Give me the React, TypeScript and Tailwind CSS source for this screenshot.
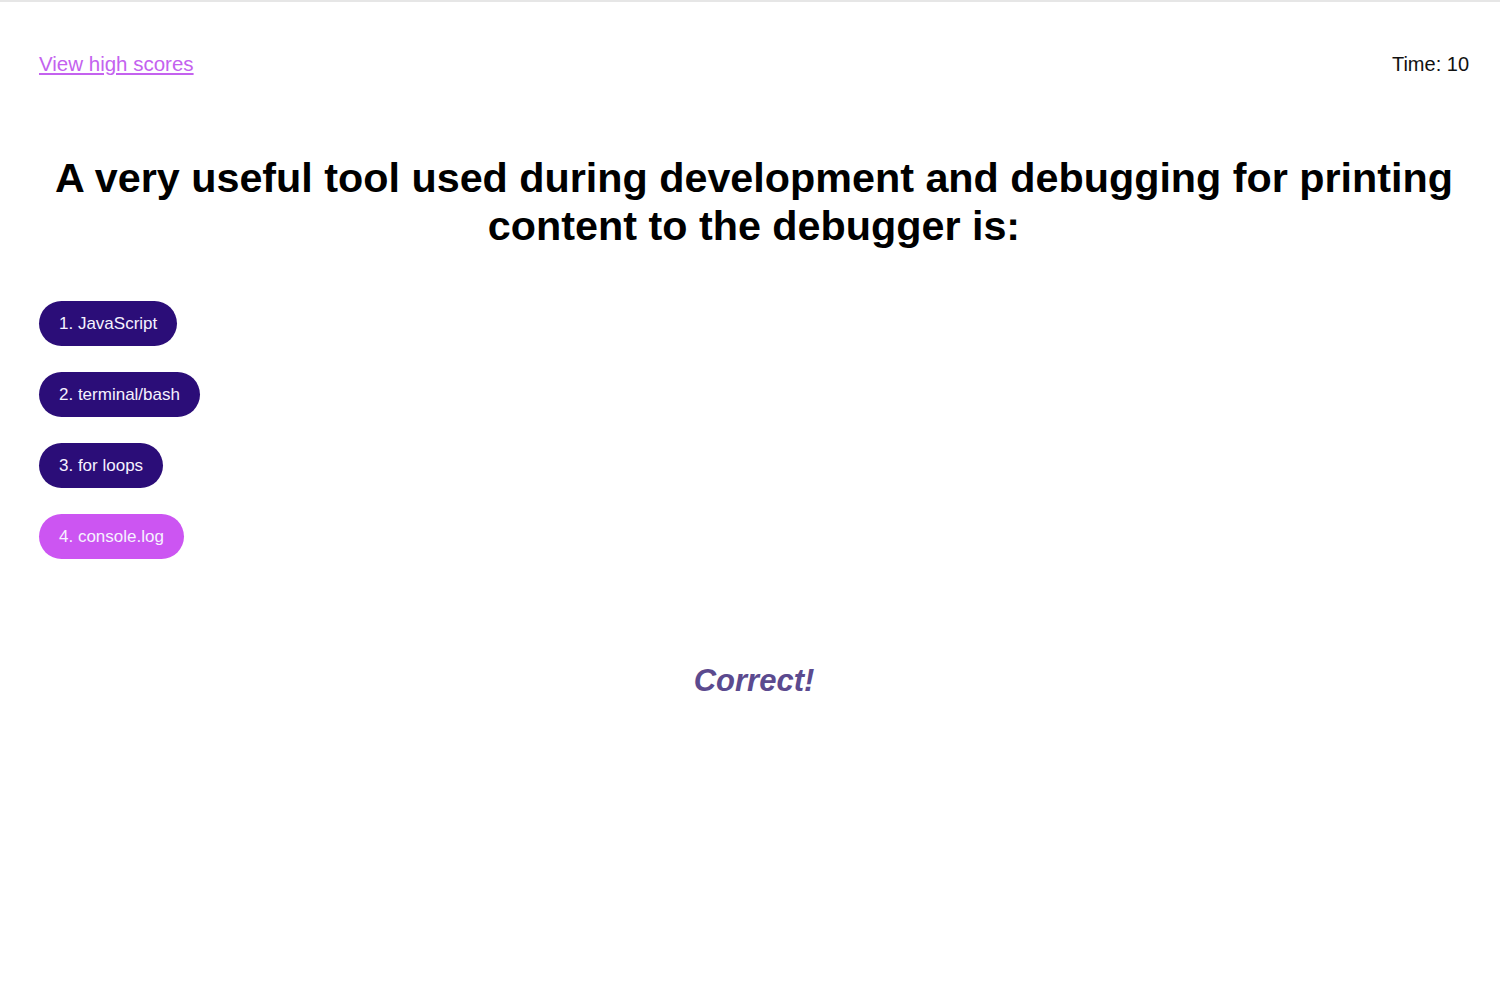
const choices = ['1. JavaScript', '2. terminal/bash', '3. for loops', '4. console.log'];

export default function App() {
  const picked = 3;

  return (
    <div className="min-h-screen bg-white pl-[39px] pr-[31px] font-['Liberation_Sans',Arial,sans-serif] text-black">
      <div className="-ml-[39px] -mr-[31px] h-[2px] bg-[#e6e6e6]" />
      <header className="flex items-center justify-between pt-[49px]">
        <a href="#" className="text-[20.5px] leading-[26px] text-[#c462ef] underline">
          View high scores
        </a>
        <span className="text-[20px] leading-[26px] text-[#111]">Time: 10</span>
      </header>

      <main>
        <h1 className="mt-[77px] text-center text-[41.3px] font-bold leading-[48px]">
          A very useful tool used during development and debugging for printing content to the debugger is:
        </h1>

        <div className="mt-[51px] flex flex-col items-start gap-[26px]">
          {choices.map((c, i) => (
            <button
              key={c}
              className={`h-[45px] rounded-full px-[20px] text-[17px] text-[#f6f2ff] ${
                i === picked ? 'bg-[#cc55f2]' : 'bg-[#2b0d78]'
              }`}
            >
              {c}
            </button>
          ))}
        </div>

        <p className="mt-[99px] text-center text-[31px] font-bold italic text-[#5b4a8f]">Correct!</p>
      </main>
    </div>
  );
}
